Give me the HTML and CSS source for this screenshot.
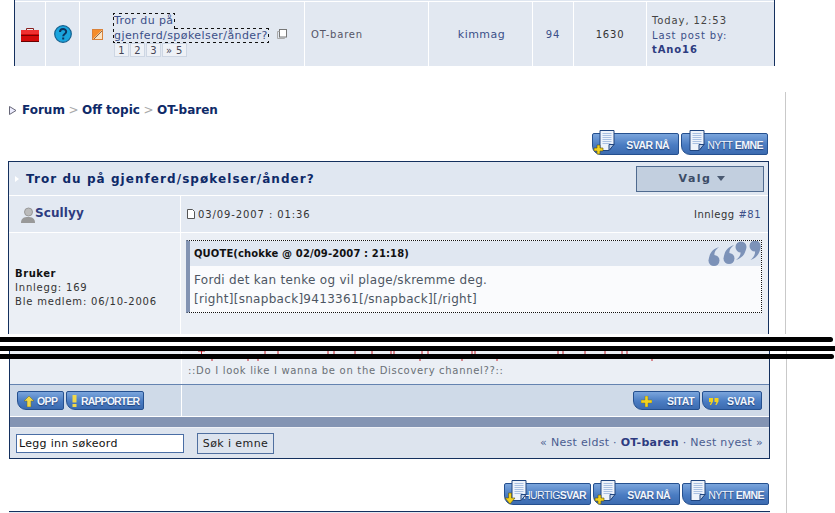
FILE: index.html
```html
<!DOCTYPE html>
<html lang="no">
<head>
<meta charset="utf-8">
<title>Tror du på gjenferd/spøkelser/ånder?</title>
<link rel="stylesheet" href="styles.css">
</head>
<body>
<svg class="defs" width="0" height="0" aria-hidden="true">
  <defs>
    <g id="doc">
      <path d="M1 .5h14v14l-5 6H1z" fill="#eef3fb" stroke="#20457f"/>
      <path d="M3.500 3.500h9M3.500 5.500h9M3.500 7.500h9M3.500 9.500h9M3.500 11.500h9M3.500 13.500h8" stroke="#a9c0e2"/>
      <path d="M10 20.500l5-6h-5z" fill="#b9cbe6" stroke="#20457f"/>
    </g>
  </defs>
</svg>

<div class="topic-row">
  <div class="cell center">
    <svg width="18" height="15" viewBox="0 0 18 15"><path d="M5.500 4V1.500h7V4" fill="#eee" stroke="#8a2020"/><rect y="3" width="18" height="12" fill="#d40a0a"/><rect y="3" width="18" height="4" fill="#f03030"/><rect y="8" width="18" height="1" fill="#7a0000"/><rect y="14" width="18" height="1" fill="#6a0000"/></svg>
  </div>
  <div class="cell center">
    <svg width="18" height="18" viewBox="0 0 18 18"><circle cx="9" cy="9" r="8.300" fill="#1aa5de" stroke="#13608f" stroke-width="1.200"/><path d="M6 7c0-4 6.200-4 6.200-.2 0 2.200-3 2.200-3 4.400" fill="none" stroke="#0c3560" stroke-width="2"/><rect x="8.200" y="12.500" width="2" height="2" fill="#0c3560"/></svg>
  </div>
  <div class="cell subject">
    <svg class="flag" width="11" height="11" viewBox="0 0 11 11"><rect x=".5" y=".5" width="10" height="10" fill="#fbe3c2" stroke="#d9823a"/><path d="M1 1h9L1 10z" fill="#f58d2a"/><path d="M2 10l8-8" stroke="#8a6a50"/></svg>
    <div class="subject-text">
      <a class="topic-link" href="#">Tror du på<br>gjenferd/spøkelser/ånder?</a><svg class="copy" width="10" height="10" viewBox="0 0 10 10"><rect x="2.500" y=".5" width="7" height="7.500" fill="#fff" stroke="#777"/><path d="M2.500 2.500H.5v7h7V8" fill="none" stroke="#aaa"/></svg>
      <div class="pages"><span>1</span><span>2</span><span>3</span><span>» 5</span></div>
    </div>
  </div>
  <div class="cell forum-name">OT-baren</div>
  <div class="cell center starter">kimmag</div>
  <div class="cell center replies">94</div>
  <div class="cell center views">1630</div>
  <div class="cell last">
    <div>Today, 12:53</div>
    <div class="last-by">Last post by:</div>
    <div class="last-name">tAno16</div>
  </div>
</div>

<section class="upper">
  <nav class="crumbs">
    <svg width="8" height="9" viewBox="0 0 8 9"><path d="M.5.5l6.500 4-6.500 4z" fill="#eef" stroke="#667"/></svg>
    <a href="#">Forum</a><span class="sep">&gt;</span><a href="#">Off topic</a><span class="sep">&gt;</span><a href="#">OT-baren</a>
  </nav>
  <div class="actions">
    <a class="btn big" href="#"><svg class="doc" width="24" height="25" viewBox="0 0 24 25"><use href="#doc" x="6"/><path d="M4 15h3v3h3v3H7v3H4v-3H1v-3h3z" fill="#f3d21f" stroke="#5a5210" stroke-width=".6"/></svg><span class="label">SVAR NÅ</span></a>
    <a class="btn big" href="#"><svg class="doc new" width="24" height="25" viewBox="0 0 24 25"><use href="#doc" x="2"/></svg><span class="label tight"><i>NYTT</i> EMNE</span></a>
  </div>
  <div class="post-box open-bottom">
    <div class="title-bar">
      <h1><svg width="4" height="6" viewBox="0 0 4 6"><path d="M0 0l4 3-4 3z" fill="#fff"/></svg>Tror du på gjenferd/spøkelser/ånder?</h1>
      <div class="options">Valg <svg width="8" height="5" viewBox="0 0 8 5"><path d="M0 0h8L4 5z" fill="#4a5a72"/></svg></div>
    </div>
    <div class="post-grid">
      <div class="author">
        <svg width="14" height="16" viewBox="0 0 14 16"><circle cx="7.500" cy="5" r="4" fill="#bbb" stroke="#999"/><path d="M0 16c0-5 3-6 7-6s7 1 7 6z" fill="#999"/></svg>
        <a href="#">Scullyy</a>
      </div>
      <div class="post-head">
        <span class="date"><svg width="8" height="10" viewBox="0 0 8 10"><path d="M.5.5h5l2 2v7h-7z" fill="#fff" stroke="#555"/></svg>03/09-2007 : 01:36</span>
        <span class="post-num">Innlegg <a href="#">#81</a></span>
      </div>
      <div class="profile">
        <strong>Bruker</strong>
        <div>Innlegg: 169</div>
        <div>Ble medlem: 06/10-2006</div>
      </div>
      <div class="post-body">
        <div class="quote">
          <div class="quote-top">
            <span>QUOTE(chokke @ 02/09-2007 : 21:18)</span>
            <svg class="marks" width="53" height="26" viewBox="0 0 53 26"><g fill="#7c92b8"><circle cx="6" cy="19.500" r="5.500"/><path d="M1 19C1 12 5 8 11 6c-4 3-5 6-4.500 9z"/><circle cx="21" cy="17.500" r="5.500"/><path d="M16 17c0-7 4-11 10-13-4 3-5 6-4.500 9z"/><circle cx="33" cy="6" r="5.500"/><path d="M38 6c0 7-4 11-10 13 4-3 5-6 4.500-9z"/><circle cx="47" cy="5" r="5.500"/><path d="M52.500 5c0 7-4 12-10 14 4-3 5-7 4.500-10z"/></g></svg>
          </div>
          <div class="quote-text">Fordi det kan tenke og vil plage/skremme deg.<br>[right][snapback]9413361[/snapback][/right]</div>
        </div>
      </div>
    </div>
  </div>
</section>

<section class="lower">
  <div class="post-box open-top">
    <div class="post-grid">
      <div class="profile-end"></div>
      <div class="sig-cell">
        <svg class="sig-ticks" width="480" height="10" viewBox="0 0 480 10" aria-hidden="true">
          <path d="M10 0h7M13.500 0v3M77 0v3M90 0v3M140 0v3M146 0v3M167 0v3M184 0v3M203 0v3M206 0v3M234 0v3M240 0v3M284 0v3M287 0v3M370 0v3M375 0v3M397 0v3M417 0v3M434 0v3M439 0v3M24 8v2M60 8v2M70 8v2M232 8v2M274 8v2M309 8v2M464 8v2" stroke="#c4202a" fill="none"/>
        </svg>
        <div class="sig">::Do I look like I wanna be on the Discovery channel??::</div>
      </div>
    </div>
    <div class="tool-row">
      <div class="tools-left">
        <a class="btn small opp" href="#"><svg width="10" height="11" viewBox="0 0 10 11"><path d="M5 0l5 5H7v6H3V5H0z" fill="#f1d84a" stroke="#6a6a20" stroke-width=".5"/></svg><span>OPP</span></a>
        <a class="btn small rapp" href="#"><svg width="5" height="12" viewBox="0 0 5 12"><path d="M.5 0h4v7.500h-4zM.5 9h4v3h-4z" fill="#f1d84a"/></svg><span>RAPPORTER</span></a>
      </div>
      <div class="tools-right">
        <a class="btn small sitat" href="#"><svg width="11" height="11" viewBox="0 0 11 11"><path d="M4 0h3v4h4v3H7v4H4V7H0V4h4z" fill="#f3d21f" stroke="#6a6a20" stroke-width=".4"/></svg><span>SITAT</span></a>
        <a class="btn small svar" href="#"><svg width="10" height="7" viewBox="0 0 10 7"><path d="M0 0h4v3.500L2 7H.8L2 4H0zM5.500 0h4v3.500l-2 3.500H6.300l1.200-3h-2z" fill="#f3d21f"/></svg><span>SVAR</span></a>
      </div>
    </div>
    <div class="bar"></div>
    <div class="foot-row">
      <form class="search">
        <input class="search-input" type="text" value="Legg inn søkeord">
        <button class="search-btn" type="button">Søk i emne</button>
      </form>
      <div class="pager">« <a href="#">Nest eldst</a> · <b>OT-baren</b> · <a href="#">Nest nyest</a> »</div>
    </div>
  </div>
  <div class="actions bottom">
    <a class="btn big" href="#"><svg class="doc" width="24" height="25" viewBox="0 0 24 25"><use href="#doc" x="6"/><path d="M3.500 13h3v5H10l-5 6-5-6h3.500z" fill="#f3d21f" stroke="#5a5210" stroke-width=".6"/></svg><span class="label hurtig"><i>HURTIG</i>SVAR</span></a>
    <a class="btn big" href="#"><svg class="doc" width="24" height="25" viewBox="0 0 24 25"><use href="#doc" x="6"/><path d="M4 15h3v3h3v3H7v3H4v-3H1v-3h3z" fill="#f3d21f" stroke="#5a5210" stroke-width=".6"/></svg><span class="label">SVAR NÅ</span></a>
    <a class="btn big" href="#"><svg class="doc new" width="24" height="25" viewBox="0 0 24 25"><use href="#doc" x="2"/></svg><span class="label tight"><i>NYTT</i> EMNE</span></a>
  </div>
  <div class="next-box"></div>
</section>

<div class="scribble s1"></div>
<div class="scribble s2"></div>
<div class="scribble s3"></div>
</body>
</html>
```

FILE: styles.css
```css
* { box-sizing: border-box; }
html, body { margin: 0; padding: 0; }
body {
  position: relative;
  width: 835px;
  height: 513px;
  overflow: hidden;
  background: #fff;
  font-family: "DejaVu Sans", sans-serif;
  font-size: 10px;
  color: #333;
}
a { color: inherit; text-decoration: none; }
.defs { position: absolute; }

/* topic row */
.topic-row {
  display: grid;
  grid-template-columns: 30px 33px 224px 123px 103px 40px 72px 127px;
  gap: 1px;
  width: 761px;
  height: 66px;
  margin-left: 14px;
  padding-top: 2px;
  border: 1px solid #14305e;
  border-width: 0 1px;
  background: #fff;
  box-shadow: inset 0 1px 0 #dfe6f0;
}
.cell {
  display: flex;
  align-items: center;
  background: #e2e8f1;
  letter-spacing: .45px;
  font-size: 10px;
}
.center { justify-content: center; }
.subject { padding-left: 12px; }
.flag { flex: none; }
.subject-text { margin: 2px 0 0 11px; font-size: 11px; line-height: 15px; white-space: nowrap; }
.topic-link {
  color: #3b4f88;
  letter-spacing: .42px;
  outline: 1px dotted #111;
}
.copy { margin-left: 9px; }
.pages { display: flex; gap: 1px; }
.pages span {
  min-width: 15px;
  height: 14px;
  padding: 0 3px;
  font-size: 10px;
  line-height: 13px;
  letter-spacing: .3px;
  text-align: center;
  color: #445;
  background: #eef1f6;
  border: 1px solid #cdd6e3;
}
.forum-name { padding-left: 6px; color: #556; letter-spacing: .8px; }
.starter { color: #3b4f88; font-size: 11px; padding-left: 2px; }
.replies { color: #3b4f88; font-size: 10px; letter-spacing: .8px; }
.views { color: #333; font-size: 10px; letter-spacing: .8px; }
.last { display: block; padding: 12px 0 0 5px; line-height: 14.500px; font-size: 10px; letter-spacing: .9px; color: #444; }
.last-by { color: #3b4f88; }
.last-name { font-weight: bold; color: #2d3b80; }

/* upper part of the page */
.upper {
  width: 786px;
  height: 242px;
  margin-top: 26px;
  padding: 10px 0 0 8px;
  border-right: 1px solid #c9c9c9;
}
.crumbs {
  display: flex;
  align-items: center;
  height: 16px;
  padding-left: 1px;
  font-size: 12px;
  font-weight: bold;
  color: #0e2a68;
}
.crumbs svg { margin-right: 5px; }
.crumbs .sep { margin: 0 3.500px; font-weight: normal; color: #aaa; }

.actions {
  display: flex;
  justify-content: flex-end;
  gap: 2px;
  width: 760px;
  height: 22px;
  margin-top: 15px;
}
.btn {
  position: relative;
  display: flex;
  align-items: center;
  height: 22px;
  border: 1px solid #25508f;
  border-radius: 2px 2px 2px 9px;
  background: linear-gradient(#7ba5dc, #4a7cc2 55%, #3c6bb0);
  font-family: "Liberation Sans", sans-serif;
  font-weight: bold;
  color: #f2f6fc;
  text-shadow: 0 1px 1px #1f3f78;
}
.btn.big { width: 87px; justify-content: flex-end; padding: 1px 4px 0 0; font-size: 10.500px; }
.doc { position: absolute; left: 0; top: -4px; }
.doc.new { left: 5px; }
.label { letter-spacing: -.55px; padding-right: 5px; }
.label.tight { padding-right: 0; }
.label.hurtig { padding-right: 0; }
.label i { font-style: normal; font-weight: normal; }

.post-box { width: 761px; border: 1px solid #14305e; background: #fff; }
.open-bottom { height: 173px; margin-top: 6px; border-bottom: 0; overflow: hidden; }
.open-top { height: 108px; border-top: 0; }

.title-bar {
  display: flex;
  align-items: center;
  justify-content: space-between;
  height: 34px;
  padding: 0 4px 0 6px;
  background: #e0e7f1;
  border-bottom: 1px solid #fff;
}
.title-bar h1 {
  display: flex;
  align-items: center;
  margin: 0;
  font-size: 12px;
  font-weight: bold;
  letter-spacing: 1.060px;
  color: #0e2a68;
}
.title-bar h1 svg { margin-right: 7px; }
.options {
  display: flex;
  align-items: center;
  justify-content: center;
  gap: 6px;
  width: 128px;
  height: 26px;
  margin-top: 1px;
  padding: 0 0 2px 4px;
  border: 1px solid #4f6a8f;
  background: #c2cfdf;
  font-size: 11px;
  font-weight: bold;
  letter-spacing: 1.500px;
  color: #3c4c66;
}

.post-grid {
  display: grid;
  grid-template-columns: 171px 1fr;
  column-gap: 1px;
  row-gap: 1px;
}
.author {
  display: flex;
  align-items: center;
  gap: 0;
  height: 36px;
  padding: 0 0 0 12px;
  background: #e3e9f2;
  font-size: 12px;
  font-weight: bold;
  letter-spacing: .1px;
  color: #2d3b80;
}
.author svg { margin-top: 2px; }
.author a { margin-top: -3px; }
.post-head {
  display: flex;
  align-items: center;
  justify-content: space-between;
  height: 36px;
  padding: 0 7px 0 6px;
  background: #e3e9f2;
  letter-spacing: .5px;
  color: #333;
}
.date { display: flex; align-items: center; gap: 3px; letter-spacing: .9px; }
.post-num a { color: #3b4f88; }
.profile {
  height: 101px;
  padding: 34px 0 0 6px;
  background: #ebeff5;
  line-height: 14px;
  letter-spacing: .8px;
}
.profile strong { color: #111; letter-spacing: .55px; }
.post-body { height: 101px; padding: 7px 6px 0 5px; background: #ebeff5; }
.quote {
  height: 73px;
  border: 1px dotted #111;
  border-left: 4px solid #8394b3;
  background: #fafbfd;
}
.quote-top {
  display: flex;
  align-items: center;
  justify-content: space-between;
  height: 25px;
  padding-left: 4px;
  background: #e0e7f1;
  font-weight: bold;
  letter-spacing: .12px;
  color: #111;
}
.marks { margin-top: 1px; }
.quote-text {
  padding: 5px 0 0 4px;
  font-size: 12px;
  line-height: 19px;
  letter-spacing: .3px;
  color: #4d5663;
}

/* lower part of the page */
.lower {
  width: 787px;
  height: 162px;
  margin-top: 17px;
  padding-left: 9px;
  border-right: 1px solid #c9c9c9;
}
.lower .post-grid { height: 33px; }
.profile-end { background: #ebeff5; }
.sig-cell { padding-left: 6px; background: #ebeff5; overflow: hidden; }
.sig-ticks { display: block; }
.sig { margin-top: 4px; line-height: 12px; letter-spacing: .69px; color: #6a6f76; }

.tool-row {
  display: grid;
  grid-template-columns: 171px 1fr;
  column-gap: 1px;
  height: 33px;
  border-top: 1px solid #6483b0;
  border-bottom: 1px solid #fff;
  background: #fff;
}
.tools-left, .tools-right {
  display: flex;
  gap: 2px;
  padding-top: 6px;
  background: #cfdae8;
}
.tools-left { padding-left: 7px; }
.tools-right { justify-content: flex-end; padding-right: 7px; }
.btn.small {
  height: 19px;
  padding-top: 1px;
  font-size: 10.500px;
  letter-spacing: -.55px;
}
.btn.opp { width: 47px; padding-left: 6px; gap: 3px; }
.btn.rapp { width: 78px; padding-left: 5px; gap: 4px; letter-spacing: -.85px; }
.btn.sitat { width: 67px; padding-left: 7px; gap: 15px; letter-spacing: -.3px; }
.btn.svar { width: 60px; padding-left: 6px; gap: 8px; letter-spacing: -.2px; }
.bar { height: 10px; background: #8394b3; }
.foot-row {
  display: flex;
  align-items: center;
  justify-content: space-between;
  height: 31px;
  padding: 1px 6px 0 6px;
  background: #dde4ee;
  border-top: 1px solid #eef1f6;
}
.search { display: flex; align-items: center; gap: 13px; margin: 0; }
.search-input {
  width: 168px;
  height: 19px;
  margin: 0;
  padding: 0 2px;
  border: 1px solid #4a6ea5;
  background: #fff;
  font: 11px "DejaVu Sans", sans-serif;
  letter-spacing: .3px;
  color: #111;
}
.search-btn {
  width: 77px;
  height: 21px;
  margin: 0;
  padding: 0;
  border: 1px solid #4f6f9f;
  background: #dde4ee;
  font: 11px "DejaVu Sans", sans-serif;
  letter-spacing: .4px;
  color: #222;
}
.pager { margin-top: -2px; font-size: 11px; letter-spacing: .3px; color: #4a5c90; }
.pager b { color: #2d3b80; }
.actions.bottom { width: 760px; margin-top: 24px; }
.next-box { width: 761px; height: 4px; margin-top: 6px; border-top: 1px solid #14305e; background: #e2e8f1; }

/* hand-drawn lines over the page */
.scribble { position: absolute; left: 0; height: 5px; background: #000; }
.s1 { top: 337px; width: 833px; border-radius: 0 3px 3px 0; }
.s2 { top: 346px; width: 835px; }
.s3 { top: 354px; width: 834px; border-radius: 0 3px 3px 0; }
```
